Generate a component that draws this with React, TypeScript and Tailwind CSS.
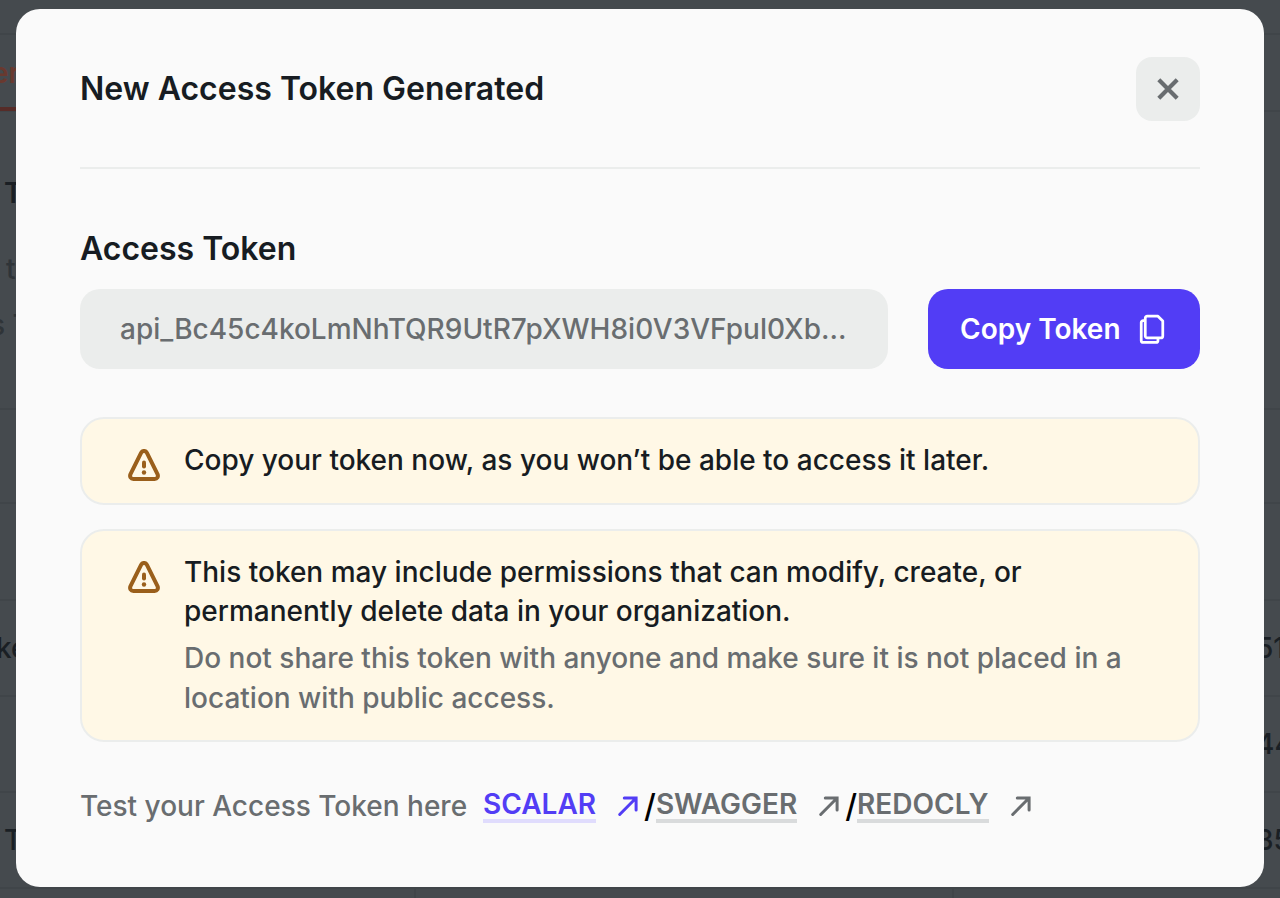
import React from "react";

const backdropRows = [
  { height: "h-[94px]", left: "", right: "" },
  { height: "h-[97px]", left: "", right: "" },
  { height: "h-24", left: "ke", right: "51" },
  { height: "h-24", left: "", right: "44" },
  { height: "h-24", left: "T", right: "35" },
];

function Backdrop() {
  return (
    <div
      aria-hidden="true"
      className="absolute inset-0 overflow-hidden whitespace-nowrap bg-[#454a4e] text-[28px] leading-10 text-[#1a1f24]"
    >
      <div className="h-[35px] border-b-2 border-[#404549]" />
      <div className="flex h-[77px] border-b-2 border-[#404549]">
        <div className="-ml-2 flex h-[76px] w-10 items-center border-b-4 border-[#562c28] pt-1 font-semibold text-[#69392f]">
          er
        </div>
      </div>
      <div className="h-[298px] border-b-2 border-[#404549] pt-[61px]">
        <p className="pl-1 font-semibold">T</p>
        <p className="pt-9 pl-1.5 font-medium text-[#2f3438]">t</p>
        <p className="-ml-2.5 pt-4 font-medium text-[#2f3438]">s T</p>
      </div>
      {backdropRows.map((row, i) => (
        <div
          key={i}
          className={`flex items-center justify-between border-b-2 border-[#404549] font-medium ${row.height}`}
        >
          <span className={row.left === "ke" ? "-ml-1" : "ml-1"}>{row.left}</span>
          <span className="w-6">{row.right}</span>
        </div>
      ))}
      <div className="flex h-4 justify-between">
        <div className="w-[416px] border-r-2 border-[#404549]" />
        <div className="w-[328px] border-l-2 border-[#404549]" />
      </div>
    </div>
  );
}

function CloseIcon() {
  return (
    <svg viewBox="0 0 32 32" className="size-8" fill="none" stroke="currentColor" strokeWidth="4.2">
      <path d="M6.8 6.8l18.4 18.4M25.2 6.8L6.8 25.2" />
    </svg>
  );
}

function CopyIcon() {
  return (
    <svg
      viewBox="0 0 32 32"
      className="size-8"
      fill="none"
      stroke="currentColor"
      strokeWidth="2.8"
      strokeLinejoin="round"
    >
      <path d="M10.5 3h10.8l4.9 4.9V23a2 2 0 0 1-2 2H10.4a2 2 0 0 1-2-2V5a2 2 0 0 1 2-2z" />
      <path d="M8.4 7.4H6.3a2 2 0 0 0-2 2v18.2a2 2 0 0 0 2 2h13a2 2 0 0 0 2-2V25" />
    </svg>
  );
}

function WarningIcon() {
  return (
    <svg
      viewBox="0 0 32 32"
      className="mt-2 size-8 shrink-0 text-[#9a5f1b]"
      fill="none"
      stroke="currentColor"
      strokeLinecap="round"
      strokeLinejoin="round"
    >
      <path
        strokeWidth="4"
        d="M13.2 3.6 2.5 25.2C1.4 27.6 2.8 30 5.4 30h21.2c2.6 0 4-2.4 2.9-4.8L18.8 3.6c-1.2-2.2-4.4-2.2-5.6 0z"
      />
      <path strokeWidth="4" d="M16 13.5v4" />
      <circle cx="16" cy="23.5" r="2.2" fill="currentColor" stroke="none" />
    </svg>
  );
}

function ArrowIcon() {
  return (
    <svg viewBox="0 0 32 32" className="ml-4 size-8" fill="none" stroke="currentColor" strokeWidth="3">
      <path d="M7.7 24.5 23.8 8.2M12.3 8h11.8v12" strokeLinecap="round" />
    </svg>
  );
}

function Notice({ title, children }: { title: string; children?: React.ReactNode }) {
  return (
    <div className="flex gap-6 rounded-3xl border-2 border-[#ebedec] bg-[#fff8e6] py-[22px] pr-12 pl-[46px]">
      <WarningIcon />
      <div>
        <p className="leading-[39px] text-[#171c22]">{title}</p>
        {children && <p className="mt-[7px] leading-10">{children}</p>}
      </div>
    </div>
  );
}

function DocLink({ label, active }: { label: string; active?: boolean }) {
  return (
    <a href="#" className={`flex items-center font-semibold ${active ? "text-[#523df5]" : "text-[#696d70]"}`}>
      <span className={`border-b-4 leading-[30px] ${active ? "border-[#e0dcfd]" : "border-[#d9dbdc]"}`}>{label}</span>
      <ArrowIcon />
    </a>
  );
}

export default function App() {
  return (
    <div className="relative flex min-h-screen flex-col justify-center pb-0.5 font-['Inter',sans-serif] [font-optical-sizing:none]">
      <Backdrop />
      <div
        role="dialog"
        aria-labelledby="dialog-title"
        className="relative mx-4 rounded-3xl bg-[#fafafa] px-16 pt-12 pb-[61px] text-[28px] leading-10 font-medium text-[#696d70]"
      >
        <header className="flex items-center justify-between border-b-2 border-[#ebedec] pb-[46px]">
          <h1 id="dialog-title" className="text-[32px] font-semibold text-[#171c22]">
            New Access Token Generated
          </h1>
          <button
            type="button"
            aria-label="Close"
            className="flex size-16 items-center justify-center rounded-2xl bg-[#ebedec]"
          >
            <CloseIcon />
          </button>
        </header>

        <label htmlFor="token" className="mt-15 block text-[32px] font-semibold text-[#171c22]">
          Access Token
        </label>
        <div className="mt-5 flex gap-10">
          <input
            id="token"
            readOnly
            value="api_Bc45c4koLmNhTQR9UtR7pXWH8i0V3VFpul0Xb..."
            className="h-20 min-w-0 flex-1 rounded-[20px] bg-[#ebedec] px-10 text-ellipsis outline-none"
          />
          <button
            type="button"
            className="flex h-20 w-68 shrink-0 items-center gap-4 rounded-[20px] bg-[#523df5] px-8 font-semibold whitespace-nowrap text-white"
          >
            Copy Token
            <CopyIcon />
          </button>
        </div>

        <div className="mt-12 flex flex-col gap-6">
          <Notice title="Copy your token now, as you won’t be able to access it later." />
          <Notice title="This token may include permissions that can modify, create, or permanently delete data in your organization.">
            Do not share this token with anyone and make sure it is not placed in a location with public access.
          </Notice>
        </div>

        <div className="mt-11 flex items-center">
          <p className="mr-4">Test your Access Token here</p>
          <DocLink label="SCALAR" active />
          <span className="text-[32px] text-black">/</span>
          <DocLink label="SWAGGER" />
          <span className="text-[32px] text-black">/</span>
          <DocLink label="REDOCLY" />
        </div>
      </div>
    </div>
  );
}
